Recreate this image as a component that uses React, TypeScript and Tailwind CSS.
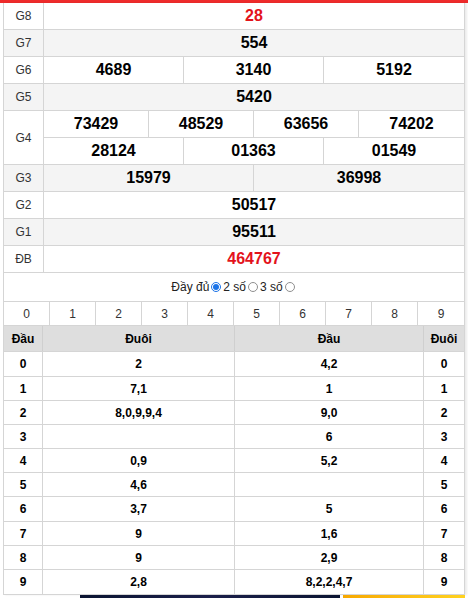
const prizes: { label: string; rows: string[][]; red?: boolean; alt?: boolean }[] = [
  { label: "G8", rows: [["28"]], red: true },
  { label: "G7", rows: [["554"]], alt: true },
  { label: "G6", rows: [["4689", "3140", "5192"]] },
  { label: "G5", rows: [["5420"]], alt: true },
  { label: "G4", rows: [["73429", "48529", "63656", "74202"], ["28124", "01363", "01549"]] },
  { label: "G3", rows: [["15979", "36998"]], alt: true },
  { label: "G2", rows: [["50517"]] },
  { label: "G1", rows: [["95511"]], alt: true },
  { label: "ĐB", rows: [["464767"]], red: true },
];

const loto = [
  { n: "0", tail: "2", head: "4,2", h: "h-[25px]" },
  { n: "1", tail: "7,1", head: "1", h: "h-[24px]" },
  { n: "2", tail: "8,0,9,9,4", head: "9,0", h: "h-[24px]" },
  { n: "3", tail: "", head: "6", h: "h-[24px]" },
  { n: "4", tail: "0,9", head: "5,2", h: "h-[24px]" },
  { n: "5", tail: "4,6", head: "", h: "h-[24px]" },
  { n: "6", tail: "3,7", head: "5", h: "h-[25px]" },
  { n: "7", tail: "9", head: "1,6", h: "h-[24px]" },
  { n: "8", tail: "9", head: "2,9", h: "h-[24px]" },
  { n: "9", tail: "2,8", head: "8,2,2,4,7", h: "h-[25px]" },
];

const gridCols: Record<number, string> = {
  1: "grid-cols-1",
  2: "grid-cols-2",
  3: "grid-cols-3",
  4: "grid-cols-4",
};

const Radio = ({ checked }: { checked?: boolean }) =>
  checked ? (
    <span className="mx-[2px] inline-flex h-[10px] w-[10px] items-center justify-center rounded-full border border-[#1a73e8] bg-white">
      <span className="h-[6px] w-[6px] rounded-full bg-[#1a73e8]" />
    </span>
  ) : (
    <span className="mx-[2px] inline-block h-[10px] w-[10px] rounded-full border border-[#8f8f8f] bg-white" />
  );

export default function App() {
  return (
    <div className="h-[598px] w-[468px] overflow-hidden bg-white font-['Liberation_Sans',Arial,sans-serif] text-[#222]">
      {/* red top bar */}
      <div className="h-[3px] bg-[#ee2b2b]" />

      <div className="ml-[3px] w-[462px] border-x border-[#d5d5d5] shadow-[2px_0_2px_rgba(0,0,0,0.08)]">
        {/* prize table */}
        {prizes.map((p) => (
          <div
            key={p.label}
            className={`flex border-b border-[#d5d5d5] ${p.alt ? "bg-[#f4f4f4]" : "bg-white"}`}
          >
            <div className="flex w-[40px] shrink-0 items-center justify-center border-r border-[#d5d5d5] text-[12px] text-[#333]">
              {p.label}
            </div>
            <div className="flex flex-1 flex-col">
              {p.rows.map((r, i) => (
                <div
                  key={i}
                  className={`grid h-[26px] ${gridCols[r.length]} ${
                    i < p.rows.length - 1 ? "h-[27px] border-b border-[#d5d5d5]" : ""
                  }`}
                >
                  {r.map((num, j) => (
                    <div
                      key={j}
                      className={`flex items-center justify-center text-[16px] font-bold ${
                        p.red ? "text-[#e3131b]" : "text-black"
                      } ${j < r.length - 1 ? "border-r border-[#d5d5d5]" : ""}`}
                    >
                      {num}
                    </div>
                  ))}
                </div>
              ))}
            </div>
          </div>
        ))}

        {/* view options */}
        <div className="flex h-[28px] items-center justify-center text-[12px] text-[#222]">
          <span>Đầy đủ</span>
          <Radio checked />
          <span>2 số</span>
          <Radio />
          <span>3 số</span>
          <Radio />
        </div>

        {/* digit filter */}
        <div className="grid h-[25px] grid-cols-10 border-y border-[#d5d5d5] text-[12px] text-[#333]">
          {["0", "1", "2", "3", "4", "5", "6", "7", "8", "9"].map((d, i) => (
            <div
              key={d}
              className={`flex items-center justify-center ${i < 9 ? "border-r border-[#d5d5d5]" : ""}`}
            >
              {d}
            </div>
          ))}
        </div>

        {/* loto head / tail table */}
        <div className="grid h-[26px] grid-cols-[39px_192px_1fr_40px] border-b border-[#d5d5d5] bg-[#dedede] text-[12px] font-bold text-black">
          <div className="flex items-center justify-center border-r border-[#cfcfcf]">Đầu</div>
          <div className="flex items-center justify-center border-r border-[#cfcfcf]">Đuôi</div>
          <div className="flex items-center justify-center border-r border-[#cfcfcf]">Đầu</div>
          <div className="flex items-center justify-center">Đuôi</div>
        </div>
        {loto.map((r) => (
          <div
            key={r.n}
            className={`grid ${r.h} grid-cols-[39px_192px_1fr_40px] border-b border-[#d5d5d5] text-[12px] font-bold text-black`}
          >
            <div className="flex items-center justify-center border-r border-[#d5d5d5]">{r.n}</div>
            <div className="flex items-center justify-center border-r border-[#d5d5d5]">{r.tail}</div>
            <div className="flex items-center justify-center border-r border-[#d5d5d5]">{r.head}</div>
            <div className="flex items-center justify-center">{r.n}</div>
          </div>
        ))}
      </div>

      {/* banner peeking below */}
      <div className="ml-[80px] flex h-[4px] gap-[3px]">
        <div className="w-[260px] bg-gradient-to-r from-[#0b1532] via-[#1b1f4a] to-[#0b1532]" />
        <div className="w-[122px] bg-gradient-to-r from-[#f7a800] to-[#ffd21f]" />
      </div>
    </div>
  );
}
